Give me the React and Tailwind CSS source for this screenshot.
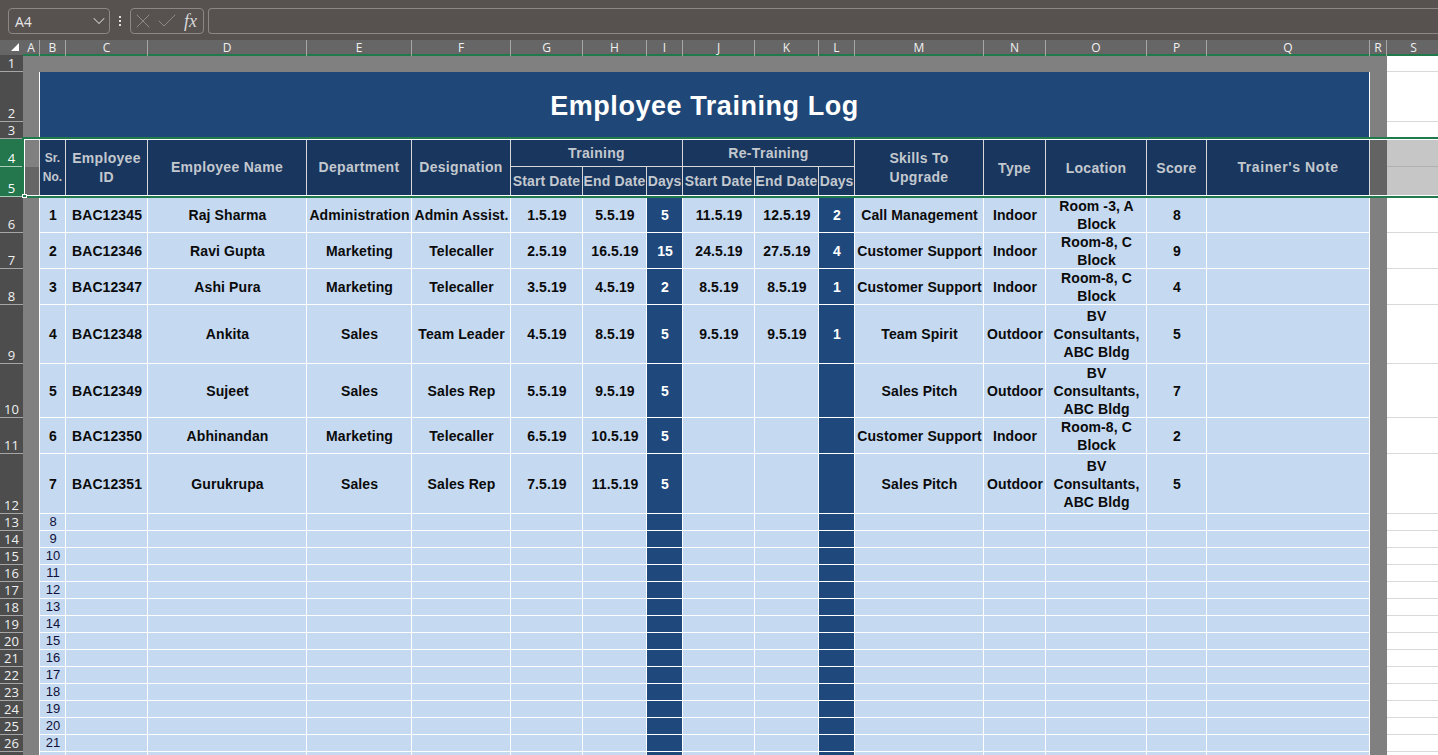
import { ChevronDown, X, Check } from "lucide-react";

const columns = ["A", "B", "C", "D", "E", "F", "G", "H", "I", "J", "K", "L", "M", "N", "O", "P", "Q", "R", "S"];

const employees = [
  { row: 6, cells: ["1", "BAC12345", "Raj Sharma", "Administration", "Admin Assist.", "1.5.19", "5.5.19", "5", "11.5.19", "12.5.19", "2", "Call Management", "Indoor", "Room -3, A Block", "8"] },
  { row: 7, cells: ["2", "BAC12346", "Ravi Gupta", "Marketing", "Telecaller", "2.5.19", "16.5.19", "15", "24.5.19", "27.5.19", "4", "Customer Support", "Indoor", "Room-8, C Block", "9"] },
  { row: 8, cells: ["3", "BAC12347", "Ashi Pura", "Marketing", "Telecaller", "3.5.19", "4.5.19", "2", "8.5.19", "8.5.19", "1", "Customer Support", "Indoor", "Room-8, C Block", "4"] },
  { row: 9, cells: ["4", "BAC12348", "Ankita", "Sales", "Team Leader", "4.5.19", "8.5.19", "5", "9.5.19", "9.5.19", "1", "Team Spirit", "Outdoor", "BV Consultants, ABC Bldg", "5"] },
  { row: 10, cells: ["5", "BAC12349", "Sujeet", "Sales", "Sales Rep", "5.5.19", "9.5.19", "5", "", "", "", "Sales Pitch", "Outdoor", "BV Consultants, ABC Bldg", "7"] },
  { row: 11, cells: ["6", "BAC12350", "Abhinandan", "Marketing", "Telecaller", "6.5.19", "10.5.19", "5", "", "", "", "Customer Support", "Indoor", "Room-8, C Block", "2"] },
  { row: 12, cells: ["7", "BAC12351", "Gurukrupa", "Sales", "Sales Rep", "7.5.19", "11.5.19", "5", "", "", "", "Sales Pitch", "Outdoor", "BV Consultants, ABC Bldg", "5"] },
];

const emptyRows = [];
for (let i = 13; i <= 27; i++) emptyRows.push(i);

function RowHead({ n, selected }) {
  return (
    <div
      className={
        selected
          ? "flex items-end justify-center bg-[#24774c] border-b border-[#a9cdb9] text-white text-[13px] leading-[15px] font-['Open_Sans',sans-serif]"
          : "flex items-end justify-center bg-[#4d4d4d] border-b border-[#a6a6a6] text-[#f0f0f0] text-[13px] leading-[15px] font-['Open_Sans',sans-serif]"
      }
    >
      {n}
    </div>
  );
}

function Blank({ tinted }) {
  return <div className={tinted ? "bg-[#c6c6c6] border-b border-[#b0b0b0]" : "bg-white border-b border-[#d9d9d9]"} />;
}

function Grey() {
  return <div className="bg-[#808080] border-r border-white" />;
}

function Head({ children, className = "text-[14px] leading-[19px] tracking-[0.3px]" }) {
  return (
    <div className={"flex items-center justify-center text-center bg-[#18365e] text-[#c3c8cf] font-bold border-r border-b border-[#d8d8d8] " + className}>
      {children}
    </div>
  );
}

function Cell({ children, dark }) {
  return (
    <div
      className={
        dark
          ? "flex items-center justify-center text-center pl-px bg-[#1f497d] text-white font-bold text-[14px] leading-[18px] border-r border-b border-white"
          : "flex items-center justify-center text-center pl-px bg-[#c5d9f1] text-[#0b0b0b] font-bold text-[14px] leading-[18px] tracking-[0.1px] border-r border-b border-white"
      }
    >
      {children}
    </div>
  );
}

export default function App() {
  return (
    <div className="w-[1438px] h-[755px] overflow-hidden bg-white flex flex-col font-['Liberation_Sans',Arial,sans-serif]">
      {/* formula bar */}
      <div className="h-10 shrink-0 bg-[#575150] flex items-center pl-2 pt-0.5 font-['Open_Sans',sans-serif]">
        <div className="w-[102px] h-[26px] flex items-center justify-between pl-1.5 border border-[#8c8786] rounded-[4px] text-[#e6e6e6] text-[14px]">
          <span>A4</span>
          <ChevronDown size={20} strokeWidth={1.25} className="text-[#d0d0d0]" />
        </div>
        <div className="w-5 flex flex-col items-center gap-[2px]">
          <span className="w-[2px] h-[2px] bg-[#e0e0e0]" />
          <span className="w-[2px] h-[2px] bg-[#e0e0e0]" />
          <span className="w-[2px] h-[2px] bg-[#e0e0e0]" />
        </div>
        <div className="w-[74px] h-[26px] flex items-center border border-[#8c8786] rounded-[4px]">
          <X size={24} strokeWidth={1} className="text-[#8f8a89]" />
          <Check size={24} strokeWidth={1} className="text-[#8f8a89]" />
          <span className="ml-[5px] text-[#d8d8d8] italic text-[18px] leading-none font-['Liberation_Serif',serif]">fx</span>
        </div>
        <div className="ml-1 flex-1 h-[26px] border border-r-0 border-[#8c8786] rounded-l-[4px]" />
      </div>

      {/* sheet */}
      <div className="relative flex-1 overflow-hidden">
        <div className="grid w-[1441px] grid-cols-[23px_17px_26px_82px_159px_105px_99px_72px_64px_36px_72px_64px_36px_129px_62px_101px_60px_163px_17px_54px] grid-rows-[16px_16px_50px_17px_28px_30px_36px_36px_36px_59px_54px_36px_60px_repeat(15,17px)]">
          {/* column letters */}
          <div className="relative bg-[#666666] border-b border-[#4d4d4d]">
            <div className="absolute right-1 bottom-1 w-0 h-0 border-l-[8px] border-l-transparent border-b-[8px] border-b-white" />
          </div>
          {columns.map((c) => (
            <div
              key={c}
              className="flex items-start justify-center bg-[#666666] text-[#f0f0f0] text-[12px] leading-[16px] border-r border-[#a6a6a6] shadow-[inset_0_-2px_0_#217a4c] font-['Open_Sans',sans-serif]"
            >
              {c}
            </div>
          ))}

          {/* row 1 */}
          <RowHead n="1" />
          <div className="col-span-18 bg-[#808080]" />
          <Blank />

          {/* rows 2-3, merged title */}
          <RowHead n="2" />
          <div className="row-span-2 bg-[#808080] border-r border-white" />
          <div className="col-span-16 row-span-2 flex items-start justify-center pt-4 bg-[#1f4878] text-white font-bold text-[27px] leading-[37px] tracking-[0.55px] border-r border-white">
            Employee Training Log
          </div>
          <div className="row-span-2 bg-[#808080]" />
          <Blank />
          <RowHead n="3" />
          <Blank />

          {/* rows 4-5, table head */}
          <RowHead n="4" selected />
          <div className="row-span-2 flex flex-col border-r border-[#d8d8d8]">
            <div className="h-7 bg-[#808080]" />
            <div className="flex-1 bg-[#666666]" />
          </div>
          <Head className="row-span-2 text-[12px] leading-[19px]">Sr.<br />No.</Head>
          <Head className="row-span-2 text-[14px] leading-[19px] tracking-[0.3px]">Employee<br />ID</Head>
          <Head className="row-span-2 text-[14px] leading-[19px] tracking-[0.3px]">Employee Name</Head>
          <Head className="row-span-2 text-[14px] leading-[19px] tracking-[0.3px]">Department</Head>
          <Head className="row-span-2 text-[14px] leading-[19px] tracking-[0.3px]">Designation</Head>
          <Head className="col-span-3 pt-0.5 text-[14px] leading-[19px] tracking-[0.3px]">Training</Head>
          <Head className="col-span-3 pt-0.5 text-[14px] leading-[19px] tracking-[0.3px]">Re-Training</Head>
          <Head className="row-span-2 text-[14px] leading-[19px] tracking-[0.3px]">Skills To<br />Upgrade</Head>
          <Head className="row-span-2 pt-0.5 text-[14px] leading-[19px] tracking-[0.3px]">Type</Head>
          <Head className="row-span-2 pt-0.5 text-[14px] leading-[19px] tracking-[0.3px]">Location</Head>
          <Head className="row-span-2 pt-0.5 text-[14px] leading-[19px] tracking-[0.3px]">Score</Head>
          <Head className="row-span-2 text-[14px] leading-[19px] tracking-[0.6px]">Trainer's Note</Head>
          <div className="row-span-2 bg-[#636363]" />
          <Blank tinted />
          <RowHead n="5" selected />
          <Head className="text-[14px] leading-[19px] tracking-[0.15px]">Start Date</Head>
          <Head className="text-[14px] leading-[19px] tracking-[0.15px]">End Date</Head>
          <Head className="text-[14px] leading-[19px]">Days</Head>
          <Head className="text-[14px] leading-[19px] tracking-[0.15px]">Start Date</Head>
          <Head className="text-[14px] leading-[19px] tracking-[0.15px]">End Date</Head>
          <Head className="text-[14px] leading-[19px]">Days</Head>
          <Blank tinted />

          {/* filled rows */}
          {employees.map((e) => (
            <div key={e.row} className="contents">
              <RowHead n={e.row} />
              <Grey />
              {e.cells.map((v, i) => (
                <Cell key={i} dark={i === 7 || i === 10}>{v}</Cell>
              ))}
              <Cell />
              <div className="bg-[#808080]" />
              <Blank />
            </div>
          ))}

          {/* empty rows */}
          {emptyRows.map((n) => (
            <div key={n} className="contents">
              <RowHead n={n} />
              <Grey />
              {columns.slice(1, 17).map((c, i) => (
                <div
                  key={c}
                  className={
                    i === 7 || i === 10
                      ? "bg-[#1f497d] border-r border-b border-white"
                      : "flex items-center justify-center pb-px pl-px bg-[#c5d9f1] text-[#10103a] text-[13px] leading-none border-r border-b border-white"
                  }
                >
                  {i === 0 ? n - 5 : ""}
                </div>
              ))}
              <div className="bg-[#808080]" />
              <Blank />
            </div>
          ))}
        </div>

        {/* selection box over rows 4-5 */}
        <div className="absolute left-[22px] top-[97px] w-[1440px] h-[61px] border-2 border-[#217a4c] pointer-events-none">
          <div className="w-full h-full border border-white" />
          <div className="absolute -left-0.5 -bottom-0.5 w-[5px] h-[4px] bg-[#217a4c] border border-white" />
        </div>
      </div>
    </div>
  );
}
